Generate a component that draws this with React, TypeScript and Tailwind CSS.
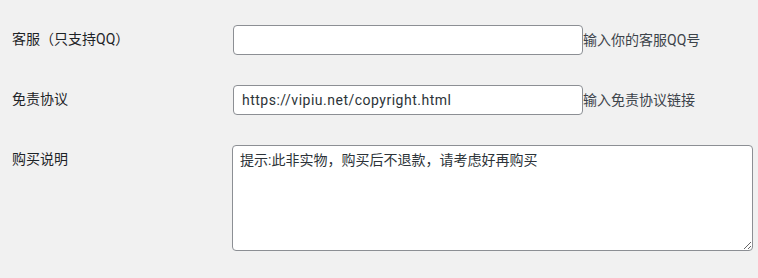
import React from 'react';

const font = { fontFamily: 'Roboto, "Noto Sans CJK SC", sans-serif' };

const App: React.FC = () => {
  return (
    <div
      className="w-[758px] h-[278px] bg-[#f1f1f1] text-[14px] text-[#1d2327] pl-[12px] pt-[25px] overflow-hidden"
      style={font}
    >
      <div className="flex flex-col gap-[30px]">
        {/* QQ */}
        <div className="flex items-start">
          <label className="w-[221px] shrink-0 pt-[4px] leading-[20px]">客服（只支持QQ）</label>
          <input
            type="text"
            className="w-[350px] h-[30px] px-[8px] bg-white border border-[#8c8f94] rounded-[4px] text-[14px] text-[#2c3338] outline-none"
          />
          <span className="pt-[5px] leading-[20px] text-[#3c434a]">输入你的客服QQ号</span>
        </div>

        {/* copyright */}
        <div className="flex items-start">
          <label className="w-[221px] shrink-0 pt-[4px] leading-[20px]">免责协议</label>
          <input
            type="text"
            defaultValue="https://vipiu.net/copyright.html"
            className="w-[350px] h-[30px] px-[8px] bg-white border border-[#8c8f94] rounded-[4px] text-[14px] tracking-[0.5px] text-[#2c3338] outline-none"
            style={font}
          />
          <span className="pt-[5px] leading-[20px] text-[#3c434a]">输入免责协议链接</span>
        </div>

        {/* purchase note */}
        <div className="flex items-start">
          <label className="w-[220px] shrink-0 pt-[4px] leading-[20px]">购买说明</label>
          <textarea
            defaultValue="提示:此非实物，购买后不退款，请考虑好再购买"
            className="w-[521px] h-[106px] px-[7px] py-[4px] bg-white border border-[#8c8f94] rounded-[4px] text-[14px] leading-[20px] text-[#2c3338] outline-none"
            style={font}
          />
        </div>
      </div>
    </div>
  );
};

export default App;
